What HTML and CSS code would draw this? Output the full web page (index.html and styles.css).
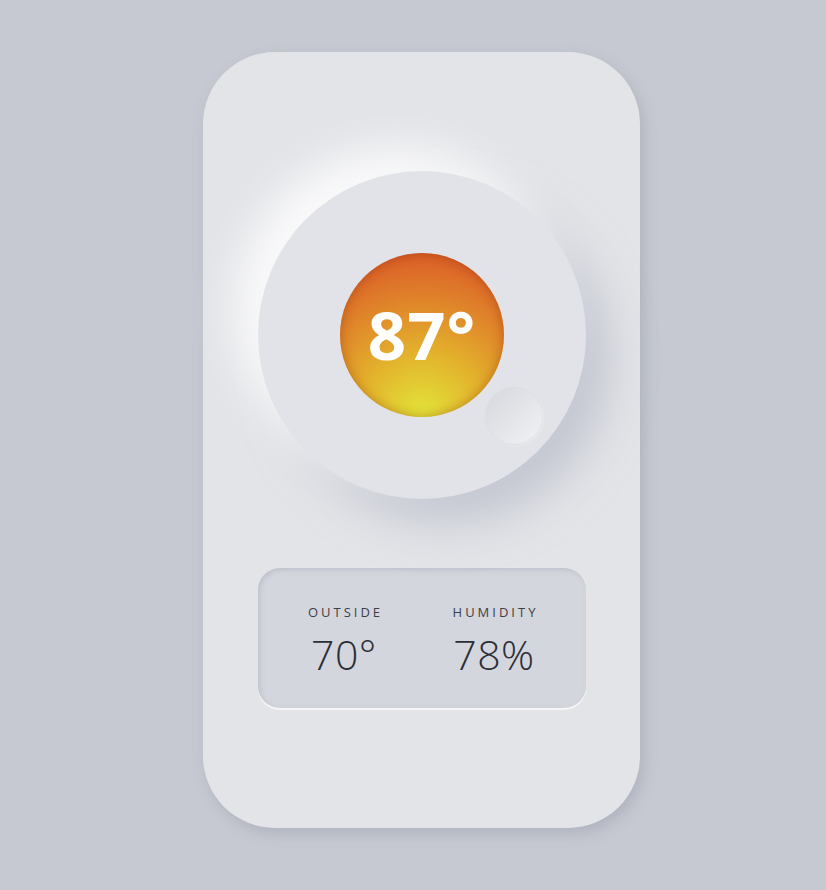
FILE: index.html
```html
<!DOCTYPE html>
<html lang="en">
<head>
    <meta charset="UTF-8">
    <meta name="viewport" content="width=device-width, initial-scale=1.0">
    <title>Thermostat</title>
    <link rel="stylesheet" href="styles.css">
</head>
<body>
    <div class="thermostat">
        <div class="dial">
            <div class="temp">87°</div>
            <div class="knob"></div>
        </div>
        <div class="info">
            <div class="stat">
                <span class="label">OUTSIDE</span>
                <span class="value">70°</span>
            </div>
            <div class="stat">
                <span class="label">HUMIDITY</span>
                <span class="value">78%</span>
            </div>
        </div>
    </div>
</body>
</html>
```

FILE: styles.css
```css
body {
    margin: 0;
    height: 890px;
    background-color: #c6c9d1;
    font-family: "Open Sans", Arial, sans-serif;
}

.thermostat {
    position: relative;
    margin: 52px 0 0 203px;
    width: 437px;
    height: 776px;
    box-sizing: border-box;
    padding: 119px 0 0 55px;
    background-color: #e3e4e8;
    border-radius: 72px;
    box-shadow: 4px 6px 14px rgba(150, 155, 170, 0.45);
}

.dial {
    position: relative;
    width: 328px;
    height: 328px;
    border-radius: 50%;
    background-color: #e2e3e8;
    display: flex;
    justify-content: center;
    align-items: center;
    box-shadow: -24px -24px 40px rgba(255, 255, 255, 0.8),
                24px 24px 44px rgba(170, 175, 190, 0.55);
}

.temp {
    width: 164px;
    height: 164px;
    border-radius: 50%;
    display: flex;
    justify-content: center;
    align-items: center;
    padding-bottom: 2px;
    box-sizing: border-box;
    color: #fff;
    font-size: 67px;
    font-weight: 700;
    letter-spacing: 1px;
    background: radial-gradient(circle at 50% 100%, #e2e63a 0%, #e3b22c 35%, #e08a2a 60%, #dc6428 85%, #cf4f1e 100%);
    box-shadow: inset 0 0 12px rgba(130, 40, 0, 0.4);
}

.knob {
    position: absolute;
    left: 228px;
    top: 217px;
    width: 56px;
    height: 56px;
    border-radius: 50%;
    background: linear-gradient(135deg, #d5d7dd, #f1f2f4);
    box-shadow: 0 0 0 1px rgba(205, 208, 216, 0.45),
                1px 1px 3px rgba(255, 255, 255, 0.6);
}

.info {
    margin-top: 69px;
    width: 328px;
    height: 140px;
    box-sizing: border-box;
    padding: 32px 17px 0 11px;
    display: grid;
    grid-template-columns: 1fr 1fr;
    background-color: #d4d6dd;
    border-radius: 22px;
    box-shadow: inset 2px 2px 5px rgba(150, 155, 170, 0.35),
                0 2px 1px rgba(255, 255, 255, 0.7);
}

.stat {
    display: flex;
    flex-direction: column;
    align-items: center;
}

.label {
    font-size: 13px;
    letter-spacing: 3px;
    color: #3d3f46;
    line-height: 24px;
    padding-left: 3px;
}

.value {
    margin-top: 4px;
    font-size: 41px;
    font-weight: 300;
    letter-spacing: 0.5px;
    color: #2c2e35;
    line-height: 52px;
}
```
